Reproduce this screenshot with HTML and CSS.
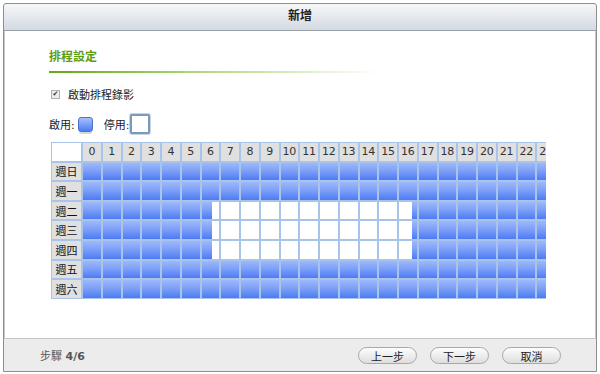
FILE: index.html
```html
<!DOCTYPE html>
<html lang="zh-Hant">
<head>
    <meta charset="UTF-8">
    <meta name="viewport" content="width=device-width, initial-scale=1.0">
    <title>新增 - 排程設定</title>
    <link rel="stylesheet" href="styles.css">
</head>
<body>
    <div class="dialog">
        <div class="dialog-header">新增</div>
        <div class="dialog-body">
            <h2 class="section-title">排程設定</h2>
            <div class="section-line"></div>

            <label class="check-row">
                <span class="check-box">&#10004;</span>
                <span>啟動排程錄影</span>
            </label>

            <div class="legend">
                <span>啟用:</span>
                <span class="legend-on"></span>
                <span class="legend-label-off">停用:</span>
                <span class="legend-off"></span>
            </div>

            <div class="schedule-wrap">
                <div class="schedule" id="schedule"></div>
            </div>
        </div>
        <div class="dialog-footer">
            <div class="step">步驟 <b>4/6</b></div>
            <div class="buttons">
                <button class="btn">上一步</button>
                <button class="btn">下一步</button>
                <button class="btn">取消</button>
            </div>
        </div>
    </div>

    <script>
        document.addEventListener('DOMContentLoaded', () => {
            const grid = document.getElementById('schedule');
            const days = ['週日', '週一', '週二', '週三', '週四', '週五', '週六'];

            const blank = document.createElement('div');
            blank.className = 'cell corner';
            grid.appendChild(blank);

            for (let h = 0; h < 24; h++) {
                const head = document.createElement('div');
                head.className = 'cell hour';
                head.textContent = h;
                grid.appendChild(head);
            }

            days.forEach((day, d) => {
                const label = document.createElement('div');
                label.className = 'cell day';
                label.textContent = day;
                grid.appendChild(label);

                for (let h = 0; h < 24; h++) {
                    const cell = document.createElement('div');
                    cell.className = 'cell slot';
                    // 週二 ~ 週四 6:30 - 16:40 停用
                    if (d >= 2 && d <= 4) {
                        if (h === 6) cell.classList.add('part-start');
                        else if (h === 16) cell.classList.add('part-end');
                        else if (h > 6 && h < 16) cell.classList.add('off');
                    }
                    grid.appendChild(cell);
                }
            });
        });
    </script>
</body>
</html>
```

FILE: styles.css
```css
:root {
    --slot-top: #9db8fb;
    --slot-bottom: #4d7bf3;
    --grid-line: #a9c4ea;
    --green: #5c9d12;
}

* {
    margin: 0;
    padding: 0;
    box-sizing: border-box;
    font-family: 'DejaVu Sans', 'Noto Sans CJK TC', sans-serif;
}

body {
    background-color: white;
    color: #222;
    font-size: 11px;
}

.dialog {
    margin: 3px 3px 0 3px;
    width: 594px;
    height: 369px;
    border: 1px solid #8e8e8e;
    border-radius: 3px 3px 0 0;
    box-shadow: inset 0 0 0 1px #c8c8c8;
    display: flex;
    flex-direction: column;
    background-color: white;
}

.dialog-header {
    height: 27px;
    background: linear-gradient(to bottom, #f6f7f9, #d4dae2);
    border-bottom: 1px solid #9aa0a8;
    border-radius: 3px 3px 0 0;
    text-align: center;
    line-height: 25px;
    font-weight: bold;
    font-size: 12px;
    color: #222;
}

.dialog-body {
    flex: 1;
    padding: 18px 0 0 45px;
}

.section-title {
    font-size: 12px;
    font-weight: bold;
    color: var(--green);
    line-height: 16px;
}

.section-line {
    margin-top: 6px;
    width: 330px;
    height: 2px;
    background: linear-gradient(to right, #62a814, #a6d36c 40%, rgba(255, 255, 255, 0));
}

.check-row {
    display: flex;
    align-items: center;
    gap: 8px;
    margin-top: 14px;
    margin-left: 2px;
    height: 14px;
    font-size: 11px;
}

.check-box {
    width: 9px;
    height: 9px;
    border: 1px solid #b0b0b0;
    background: #ececec;
    font-size: 7px;
    line-height: 7px;
    text-align: center;
    color: #333;
}

.legend {
    display: flex;
    align-items: center;
    margin-top: 12px;
    height: 22px;
    font-size: 11px;
}

.legend-on {
    width: 15px;
    height: 15px;
    margin-left: 3px;
    border-radius: 3px;
    border: 1px solid #4a72c8;
    background: linear-gradient(to bottom, #a6c0fc, #4e7cf3);
    box-shadow: 0 3px 0 -1px #d6d6d6;
}

.legend-label-off {
    margin-left: 11px;
}

.legend-off {
    width: 20px;
    height: 20px;
    margin-left: 1px;
    border-radius: 2px;
    border: 2px solid #7c98b8;
    background: white;
    box-shadow: 0 0 0 1px #c9d6e6;
}

.schedule-wrap {
    margin-top: 7px;
    margin-left: 2px;
    width: 495px;
    overflow: hidden;
}

.schedule {
    display: grid;
    grid-template-columns: 29px repeat(24, 17.75px);
    grid-auto-rows: 17.6px;
    gap: 2px;
    padding: 1px;
    width: max-content;
    background-color: var(--grid-line);
}

.cell {
    display: flex;
    align-items: center;
    justify-content: center;
}

.corner {
    background: white;
}

.hour {
    background: #e0e0e0;
    color: #333;
    font-size: 11px;
}

.day {
    background: #e0e0e0;
    font-size: 11px;
    color: #111;
}

.slot {
    background: linear-gradient(to bottom, var(--slot-top), #7ea0f8 45%, var(--slot-bottom));
}

.slot.off {
    background: white;
}

.slot.part-start {
    background:
        linear-gradient(to right, transparent 10.5px, white 10.5px),
        linear-gradient(to bottom, var(--slot-top), #7ea0f8 45%, var(--slot-bottom));
}

.slot.part-end {
    background:
        linear-gradient(to right, white 13px, transparent 13px),
        linear-gradient(to bottom, var(--slot-top), #7ea0f8 45%, var(--slot-bottom));
}

.dialog-footer {
    height: 33px;
    background-color: #ececec;
    border-top: 1px solid #c4c4c4;
    display: flex;
    align-items: center;
    justify-content: space-between;
    padding: 0 35px 0 36px;
}

.step {
    color: #555;
    font-size: 11px;
}

.step b {
    color: #555;
}

.buttons {
    display: flex;
    gap: 13px;
}

.btn {
    width: 59px;
    height: 17px;
    border: 1px solid #a8a8a8;
    border-radius: 9px;
    background: linear-gradient(to bottom, #fdfdfd, #dedede);
    font-size: 11px;
    color: #222;
    cursor: pointer;
}
```
